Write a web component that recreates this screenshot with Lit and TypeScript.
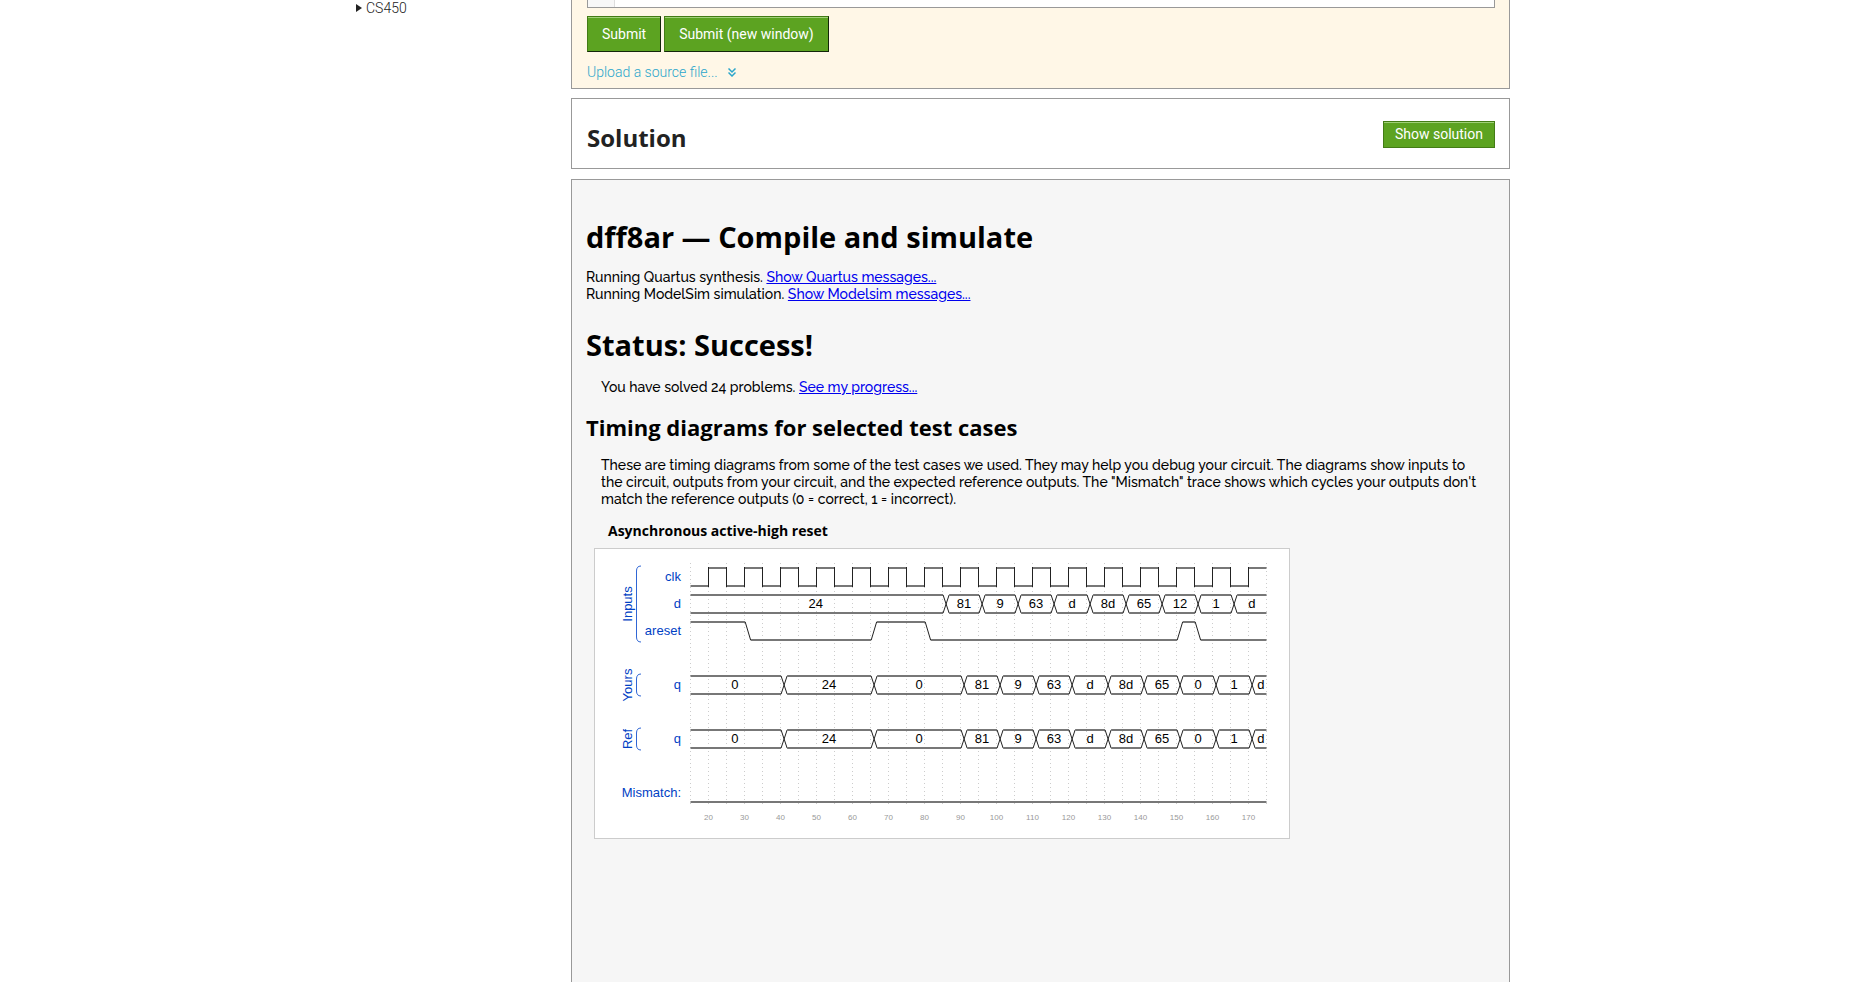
import { LitElement, html, svg, css } from "lit";
import { customElement } from "lit/decorators.js";

type Segment = { from: number; to: number; label: string };

const FIRST = 15;
const LAST = 175;
const px = (t: number) => 95.5 + (t - FIRST) * 3.6;

function bus(...parts: (string | number)[]): Segment[] {
  const out: Segment[] = [];
  for (let i = 0; i < parts.length; i += 2) {
    out.push({
      from: i ? (parts[i - 1] as number) : FIRST,
      to: i + 1 < parts.length ? (parts[i + 1] as number) : LAST,
      label: parts[i] as string,
    });
  }
  return out;
}

const D = bus("24", 86, "81", 96, "9", 106, "63", 116, "d", 126, "8d", 136, "65", 146, "12", 156, "1", 166, "d");
const Q = bus("0", 41, "24", 66, "0", 91, "81", 101, "9", 111, "63", 121, "d", 131, "8d", 141, "65", 151, "0", 161, "1", 171, "d");

@customElement("timing-diagram")
export class TimingDiagram extends LitElement {
  static styles = css`
    :host { display: block; }
    svg { display: block; width: 100%; height: auto; }
    .wave { fill: none; stroke: #222; stroke-width: 1; }
    .rail { fill: none; stroke: #777; stroke-width: 2; }
    .grid { stroke: #ccc; stroke-width: 1; stroke-dasharray: 1 3; }
    .brace { fill: none; stroke: #2f66d5; stroke-width: 1; }
    text { font-family: "Liberation Sans", Arial, sans-serif; font-size: 13px; }
    .value { text-anchor: middle; fill: #000; }
    .name { text-anchor: end; fill: #0041c4; }
    .group { text-anchor: middle; fill: #0041c4; }
    .time { text-anchor: middle; fill: #999; font-size: 8px; }
  `;

  private line(x1: number, x2: number, y: number) {
    return svg`<path class="rail" d="M${x1} ${y}H${x2}"/>`;
  }

  private bus(segments: Segment[], top: number) {
    const low = top + 18;
    return segments.map((s, i) => {
      const a = px(s.from);
      const b = px(s.to);
      const first = i === 0;
      const last = i === segments.length - 1;
      const l = first ? a : a + 3;
      const r = last ? b : b - 3;
      const mid = first ? (l + r) / 2 - 1 : (l + r) / 2;
      return svg`
        ${this.line(l, r, top)}${this.line(l, r, low)}
        ${last ? "" : svg`<path class="wave" d="M${r} ${top}L${b + 3} ${low}M${r} ${low}L${b + 3} ${top}"/>`}
        <text class="value" x=${mid} y=${top + 13}>${s.label}</text>`;
    });
  }

  private clock() {
    const rails = [];
    let edges = "";
    for (let t = FIRST, i = 0; t < LAST; t += 5, i++) {
      rails.push(this.line(px(t), px(t + 5), i % 2 ? 19 : 37));
      if (i) edges += `M${px(t)} 18V38`;
    }
    return svg`${rails}<path class="wave" d=${edges}/>`;
  }

  private reset() {
    const changes = [30.2, 65.2, 80.2, 150.2, 155.2];
    const parts = [];
    let from = FIRST;
    let y = 73;
    let slopes = "";
    for (const t of changes) {
      const next = y === 73 ? 91 : 73;
      parts.push(this.line(px(from), px(t), y));
      slopes += `M${px(t)} ${y}L${px(t + 1.5)} ${next}`;
      from = t + 1.5;
      y = next;
    }
    parts.push(this.line(px(from), px(LAST), y));
    return svg`${parts}<path class="wave" d=${slopes}/>`;
  }

  private brace(top: number, bottom: number, label: string) {
    const mid = (top + bottom) / 2;
    return svg`
      <path class="brace" d="M46 ${top}Q41.5 ${top} 41.5 ${top + 5}V${bottom - 5}Q41.5 ${bottom} 46 ${bottom}"/>
      <text class="group" transform="translate(37 ${mid}) rotate(-90)">${label}</text>`;
  }

  render() {
    const grid = [];
    for (let t = FIRST; t <= LAST; t += 5) grid.push(px(t));
    const times = [];
    for (let t = 20; t <= 170; t += 10) times.push(t);
    const names: [string, number][] = [["clk", 32], ["d", 59], ["areset", 86], ["q", 140], ["q", 194], ["Mismatch:", 248]];
    return html`<svg viewBox="0 0 694 289" role="img" aria-label="Asynchronous active-high reset">
      ${grid.map((x) => svg`<path class="grid" d="M${x} 14V257"/>`)}
      ${this.clock()} ${this.bus(D, 46)} ${this.reset()}
      ${this.bus(Q, 127)} ${this.bus(Q, 181)} ${this.line(px(FIRST), px(LAST), 253)}
      ${names.map(([n, y]) => svg`<text class="name" x="86" y=${y}>${n}</text>`)}
      ${this.brace(17, 93, "Inputs")} ${this.brace(125, 147, "Yours")} ${this.brace(179, 201, "Ref")}
      ${times.map((t) => svg`<text class="time" x=${px(t)} y="271">${t}</text>`)}
    </svg>`;
  }
}

@customElement("app-root")
export class AppRoot extends LitElement {
  static styles = css`
    :host {
      display: flex;
      box-sizing: border-box;
      min-height: 100vh;
      max-width: 1164px;
      margin: 0 auto;
      font-family: Roboto, "Open Sans", sans-serif;
      font-size: 14px;
      font-weight: 300;
      line-height: 18px;
      color: #222;
    }
    .side { flex: 0 0 215px; }
    .side a { display: flex; align-items: center; gap: 4px; color: inherit; text-decoration: none; line-height: 16px; }
    .main { flex: 1; min-width: 0; display: flex; flex-direction: column; margin-right: 10px; }
    .panel { border: 1px solid #999; padding: 0 14px 0 15px; }
    .submit { background: #fff7e7; border-top: 0; margin-bottom: 9px; }
    .editor { display: flex; height: 7px; border: 1px solid #999; border-top: 0; background: #fff; }
    .gutter { width: 26px; background: #f7f7f7; border-right: 1px solid #ddd; }
    .row { display: flex; gap: 3px; margin: 8px 0 11px; }
    button { font: inherit; font-weight: 400; color: #fff; background: #5ca321; cursor: pointer; box-shadow: inset 0 1px #a0d078; }
    .big { height: 36px; padding: 0 14px; border: 1px solid; border-color: #437c16 #13260a #13260a #437c16; }
    .small { height: 27px; padding: 0 11px 2px; border: 1px solid #437c16; }
    .upload { display: flex; width: fit-content; align-items: center; gap: 10px; color: #2ba6cb; text-decoration: none; margin-bottom: 7px; }
    .solution { display: flex; justify-content: space-between; align-items: center; height: 67px; padding-top: 2px; background: #fff; margin-bottom: 10px; }
    h1, h2, h3 { font-family: "Open Sans", sans-serif; font-weight: 700; margin: 0; color: #000; }
    .solution h2 { font-size: 24px; line-height: 32px; color: #222; padding-top: 6px; }
    .results { flex: 1; background: #f6f6f6; border-bottom: 0; padding: 0 14px 24px; color: #000; font-family: Raleway, Lato, sans-serif; font-size: 14px; font-weight: 500; line-height: 17px; }
    .results h1 { font-size: 29px; line-height: 40px; }
    .results h1.head { margin: 37px 0 12px; }
    .results h1.status { margin: 22px 0 14px; }
    .results h2 { font-size: 22px; line-height: 30px; margin: 16px 0 15px; }
    .results h3 { font-size: 14px; line-height: 20px; margin: 13px 22px 7px; }
    .results p { margin: 0; }
    .results p.indent { margin: 0 0 0 15px; }
    .results a { color: #00e; }
    .figure { box-sizing: border-box; max-width: 696px; margin-left: 8px; border: 1px solid #ccc; background: #fff; }
  `;

  render() {
    return html`
      <nav class="side">
        <a href="#cs450"><svg width="6" height="8" viewBox="0 0 6 8"><path d="M0 0L6 4L0 8Z" fill="#222"/></svg>CS450</a>
      </nav>
      <main class="main">
        <section class="panel submit">
          <div class="editor"><div class="gutter"></div></div>
          <div class="row">
            <button class="big" type="button">Submit</button>
            <button class="big" type="button">Submit (new window)</button>
          </div>
          <a class="upload" href="#upload">Upload a source file...
            <svg width="8" height="9" viewBox="0 0 8 9" fill="none" stroke="#2ba6cb" stroke-width="1.5"><path d="M.5 .5L4 4L7.5 .5M.5 4.5L4 8L7.5 4.5"/></svg>
          </a>
        </section>
        <section class="panel solution">
          <h2>Solution</h2>
          <button class="small" type="button">Show solution</button>
        </section>
        <section class="panel results">
          <h1 class="head">dff8ar — Compile and simulate</h1>
          <p>Running Quartus synthesis. <a href="#quartus">Show Quartus messages...</a></p>
          <p>Running ModelSim simulation. <a href="#modelsim">Show Modelsim messages...</a></p>
          <h1 class="status">Status: Success!</h1>
          <p class="indent">You have solved 24 problems. <a href="#progress">See my progress...</a></p>
          <h2>Timing diagrams for selected test cases</h2>
          <p class="indent">These are timing diagrams from some of the test cases we used. They may help you debug your circuit. The diagrams show inputs to<br>
            the circuit, outputs from your circuit, and the expected reference outputs. The "Mismatch" trace shows which cycles your outputs don't<br>
            match the reference outputs (0 = correct, 1 = incorrect).</p>
          <h3>Asynchronous active-high reset</h3>
          <div class="figure"><timing-diagram></timing-diagram></div>
        </section>
      </main>
    `;
  }
}
